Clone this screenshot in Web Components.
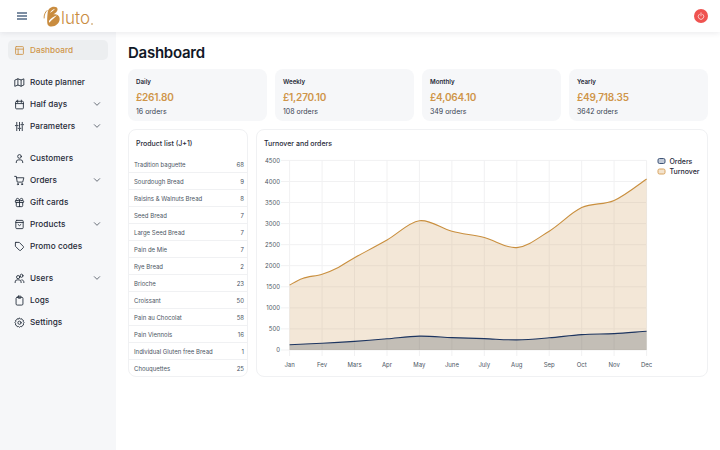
<!DOCTYPE html>
<html lang="en">
<head>
<meta charset="utf-8">
<title>Dashboard</title>
<style>
  html, body { margin: 0; height: 100%; background: #fff; }
  body { font-family: "Inter", "Noto Sans", sans-serif; color: #111827; overflow: hidden; }
  #app { display: grid; grid-template-columns: 116px 1fr; grid-template-rows: 32px 1fr; width: 720px; height: 450px; }
  app-topbar { grid-column: 1 / 3; }
</style>
</head>
<body>
<div id="app">
  <app-topbar></app-topbar>
  <side-nav>
    <nav-group>
      <nav-item icon="layout" active>Dashboard</nav-item>
    </nav-group>
    <nav-group>
      <nav-item icon="map">Route planner</nav-item>
      <nav-item icon="calendar" chevron>Half days</nav-item>
      <nav-item icon="sliders" chevron>Parameters</nav-item>
    </nav-group>
    <nav-group>
      <nav-item icon="user">Customers</nav-item>
      <nav-item icon="cart" chevron>Orders</nav-item>
      <nav-item icon="gift">Gift cards</nav-item>
      <nav-item icon="bag" chevron>Products</nav-item>
      <nav-item icon="tag">Promo codes</nav-item>
    </nav-group>
    <nav-group>
      <nav-item icon="users" chevron>Users</nav-item>
      <nav-item icon="clipboard">Logs</nav-item>
      <nav-item icon="gear">Settings</nav-item>
    </nav-group>
  </side-nav>
  <dash-main>
    <stat-card label="Daily" amount="£261.80" orders="16 orders"></stat-card>
    <stat-card label="Weekly" amount="£1,270.10" orders="108 orders"></stat-card>
    <stat-card label="Monthly" amount="£4,064.10" orders="349 orders"></stat-card>
    <stat-card label="Yearly" amount="£49,718.35" orders="3642 orders"></stat-card>
    <product-list slot="bottom"></product-list>
    <turnover-chart slot="bottom"></turnover-chart>
  </dash-main>
</div>

<script>
// tracés des icônes du menu
const ICONS = {
  layout: '<rect x="3.500" y="3.500" width="17" height="17" rx="1.500"/><path d="M3.500 9h17M9 9v11.500"/>',
  map: '<path d="M2.500 6.500 8.500 4l7 2.500L21.500 4v13.500L15.500 20l-7-2.500L2.500 20z"/><path d="M8.500 4v13.500M15.500 6.500V20"/>',
  calendar: '<rect x="3.500" y="5" width="17" height="16.500" rx="2"/><path d="M8 2.500v5M16 2.500v5M3.500 10h17"/>',
  sliders: '<path d="M6 3v5M6 12v9M12 3v11M12 18v3M18 3v3M18 10v11M3 10h6M9 16h6M15 8h6"/>',
  user: '<circle cx="12" cy="7.500" r="4"/><path d="M5 21v-1.500A4.500 4.500 0 0 1 9.500 15h5a4.500 4.500 0 0 1 4.500 4.500V21"/>',
  cart: '<path d="M1.500 3H5l2 12.500h12L21.500 6H5.500"/><circle cx="8.500" cy="20" r="1.300"/><circle cx="17.500" cy="20" r="1.300"/>',
  gift: '<rect x="3" y="8" width="18" height="4" rx="1"/><path d="M12 8v13M5 12v7a2 2 0 0 0 2 2h10a2 2 0 0 0 2-2v-7"/><path d="M7.500 8a2.500 2.500 0 0 1 0-5C10 3 12 5.500 12 8c0-2.500 2-5 4.500-5a2.500 2.500 0 0 1 0 5"/>',
  bag: '<rect x="4" y="3" width="16" height="18" rx="2"/><path d="M4 7.500h16M9 12l3 2.500 3-2.500"/>',
  tag: '<path d="M4 3h7.500l8.800 8.800a2 2 0 0 1 0 2.800l-5.700 5.700a2 2 0 0 1-2.800 0L3 11.500V4a1 1 0 0 1 1-1z"/>',
  users: '<circle cx="9" cy="9" r="3.500"/><path d="M2.500 21v-1.500A4.500 4.500 0 0 1 7 15h4a4.500 4.500 0 0 1 4.500 4.500V21"/><ellipse cx="16.500" cy="6" rx="3" ry="3.500"/><path d="M17 15c2.500 0 4.500 2 4.500 4.500V21"/>',
  clipboard: '<rect x="4.500" y="5" width="15" height="17" rx="2.500"/><rect x="8.500" y="2.500" width="7" height="4.500" rx="1.500"/>',
  gear: '<path d="M12 2.500l2.200 1.800 2.800-.5 1.200 2.600 2.600 1.200-.5 2.800 1.800 2.100-1.800 2.100.5 2.800-2.600 1.200-1.200 2.600-2.800-.5-2.200 1.800-2.200-1.800-2.800.5-1.200-2.600-2.600-1.200.5-2.800-1.800-2.100 1.800-2.100-.5-2.800 2.600-1.200L7 3.800l2.800.5z"/><circle cx="12" cy="12.500" r="3.500"/>'
};

class AppTopbar extends HTMLElement {
  constructor() {
    super();
    this.attachShadow({ mode: "open" });
    this.shadowRoot.innerHTML = `
      <style>
        :host { display: flex; align-items: center; height: 32px; background: #fff; position: relative; z-index: 2;
          box-shadow: 0 1px 6px rgba(17, 24, 39, .09); font-family: "Inter", sans-serif; }
        .burger { display: flex; flex-direction: column; gap: 1.400px; width: 10px; margin-left: 17px; }
        .burger i { display: block; height: 1.600px; background: #7d8ea3; }
        .logo { display: flex; align-items: center; margin-left: 16px; color: #c98c3f; }
        .logo svg { display: block; width: 18px; height: 21px; }
        .logo span { font-size: 17px; font-weight: 300; line-height: 22px; position: relative; top: 2px; }
        .logo b { width: 2px; height: 2px; border-radius: 50%; background: #d9b98c; align-self: flex-end; margin: 0 0 2px 1px; }
        .power { margin-left: auto; margin-right: 12px; width: 14px; height: 14px; border-radius: 50%; background: #ef5350;
          display: flex; align-items: center; justify-content: center; }
        .power svg { width: 8px; height: 8px; fill: none; stroke: #fde3e3; stroke-width: 2.400; stroke-linecap: round; }
      </style>
      <div class="burger"><i></i><i></i><i></i></div>
      <div class="logo">
        <svg viewBox="0 0 20 22" preserveAspectRatio="none" aria-hidden="true">
          <path fill="#c98c3f" d="M9.500 1.200C12.500.2 16 .8 16.200 3.300c.2 2.300-2.600 4.200-4.700 5.400 3.200-.3 7 .8 7 5 0 4.600-4.500 7.800-9 7.800-2.600 0-4.200-1.200-4.600-3C4.300 15 5 8.500 5.300 6 5.500 4 7.300 1.900 9.500 1.200z"/>
          <path fill="#fff" d="M6.500 15.800C9 13 12 10.800 15.500 9.800 13 12 10 14.600 7 17.500zM8 6.500C9.500 4.800 11.500 3 13.500 2.800 12 4.500 10 6 8 7.200z"/>
          <path fill="none" stroke="#c98c3f" stroke-width="1" d="M4.800 4.500C2.300 6.500 1 9.500 1.300 13"/>
        </svg>
        <span>luto</span><b></b>
      </div>
      <div class="power"><svg viewBox="0 0 24 24"><path d="M7 6.500a8.500 8.500 0 1 0 10 0M12 2.500v9"/></svg></div>
    `;
  }
}

class SideNav extends HTMLElement {
  constructor() {
    super();
    this.attachShadow({ mode: "open" });
    this.shadowRoot.innerHTML = `
      <style>
        :host { display: flex; flex-direction: column; gap: 12px; padding: 8px 8px 0; background: #f6f7f9; box-sizing: border-box; }
      </style>
      <slot></slot>
    `;
  }
}

class NavGroup extends HTMLElement {
  constructor() {
    super();
    this.attachShadow({ mode: "open" });
    this.shadowRoot.innerHTML = `
      <style>:host { display: flex; flex-direction: column; gap: 2px; }</style>
      <slot></slot>
    `;
  }
}

class NavItem extends HTMLElement {
  constructor() {
    super();
    this.attachShadow({ mode: "open" });
    const icon = ICONS[this.getAttribute("icon")] || "";
    const chevron = this.hasAttribute("chevron")
      ? '<svg class="chev" viewBox="0 0 24 24"><path d="M4 8l8 8 8-8"/></svg>' : "";
    this.shadowRoot.innerHTML = `
      <style>
        :host { display: flex; align-items: center; height: 20px; padding-left: 6px; border-radius: 5px;
          font: 500 8.200px/20px "Inter", sans-serif; color: #1f2937; letter-spacing: .05px; }
        :host([active]) { background: #eceef0; color: #cf9549; }
        svg { display: block; fill: none; stroke: currentColor; stroke-linecap: round; stroke-linejoin: round; }
        .ico { width: 11px; height: 11px; stroke-width: 1.900; margin-right: 5px; }
        .chev { width: 8px; height: 8px; stroke-width: 2; margin-left: auto; margin-right: 7px; }
      </style>
      <svg class="ico" viewBox="0 0 24 24">${icon}</svg>
      <slot></slot>
      ${chevron}
    `;
  }
}

class DashMain extends HTMLElement {
  constructor() {
    super();
    this.attachShadow({ mode: "open" });
    this.shadowRoot.innerHTML = `
      <style>
        :host { display: flex; flex-direction: column; padding: 10px 12px 0; box-sizing: border-box; }
        h1 { margin: 0; height: 27px; font: 600 15px/22px "Inter", sans-serif; letter-spacing: -.25px; color: #111827; }
        .stats { display: grid; grid-template-columns: repeat(4, 1fr); gap: 8px; height: 52px; }
        .bottom { display: grid; grid-template-columns: 120px 1fr; gap: 8px; height: 248px; margin-top: 8px; }
      </style>
      <h1>Dashboard</h1>
      <div class="stats"><slot></slot></div>
      <div class="bottom"><slot name="bottom"></slot></div>
    `;
  }
}

class StatCard extends HTMLElement {
  constructor() {
    super();
    this.attachShadow({ mode: "open" });
    this.shadowRoot.innerHTML = `
      <style>
        :host { display: flex; flex-direction: column; padding: 8px 8px 0; background: #f6f7f9; border-radius: 8px;
          box-sizing: border-box; font-family: "Inter", sans-serif; }
        .l { font-size: 6.200px; line-height: 10px; font-weight: 600; color: #1f2937; }
        .a { font-size: 10px; line-height: 16px; margin-top: 2px; font-weight: 600; color: #cf9549; letter-spacing: -.2px; }
        .o { font-size: 7px; line-height: 11px; margin-top: 1px; color: #374151; }
      </style>
      <div class="l">${this.getAttribute("label")}</div>
      <div class="a">${this.getAttribute("amount")}</div>
      <div class="o">${this.getAttribute("orders")}</div>
    `;
  }
}

const PRODUCTS = [
  ["Tradition baguette", 68], ["Sourdough Bread", 9], ["Raisins & Walnuts Bread", 8],
  ["Seed Bread", 7], ["Large Seed Bread", 7], ["Pain de Mie", 7], ["Rye Bread", 2],
  ["Brioche", 23], ["Croissant", 50], ["Pain au Chocolat", 58], ["Pain Viennois", 16],
  ["Individual Gluten free Bread", 1], ["Chouquettes", 25]
];

class ProductList extends HTMLElement {
  constructor() {
    super();
    this.attachShadow({ mode: "open" });
    const rows = PRODUCTS.map(p => `<li><span>${p[0].replace("&", "&amp;")}</span><span>${p[1]}</span></li>`).join("");
    this.shadowRoot.innerHTML = `
      <style>
        :host { display: block; border: 1px solid #f0f1f3; border-radius: 8px; box-sizing: border-box; font-family: "Inter", sans-serif; overflow: hidden; }
        h2 { margin: 0; padding: 8px 0 0 7px; height: 26px; box-sizing: border-box; font-size: 7px; line-height: 11px; font-weight: 500; color: #1f2937; }
        ul { list-style: none; margin: 0; padding: 0; }
        li { display: flex; justify-content: space-between; align-items: center; height: 17px; padding: 0 3px 0 5px; box-sizing: border-box;
          font-size: 6px; color: #4b5563; border-bottom: 1px solid #f0f1f3; }
        li:last-child { border-bottom: 0; }
      </style>
      <h2>Product list (J+1)</h2>
      <ul>${rows}</ul>
    `;
  }
}

// courbe lissée façon chart.js
function smooth(pts) {
  let d = `M${pts[0][0].toFixed(1)} ${pts[0][1].toFixed(1)}`;
  for (let i = 0; i < pts.length - 1; i++) {
    const p0 = pts[i - 1] || pts[i], p1 = pts[i], p2 = pts[i + 1], p3 = pts[i + 2] || p2;
    const k = 0.17;
    d += `C${(p1[0] + (p2[0] - p0[0]) * k).toFixed(1)} ${(p1[1] + (p2[1] - p0[1]) * k).toFixed(1)} ` +
         `${(p2[0] - (p3[0] - p1[0]) * k).toFixed(1)} ${(p2[1] - (p3[1] - p1[1]) * k).toFixed(1)} ${p2[0].toFixed(1)} ${p2[1].toFixed(1)}`;
  }
  return d;
}

class TurnoverChart extends HTMLElement {
  constructor() {
    super();
    this.attachShadow({ mode: "open" });
    const months = ["Jan", "Fev", "Mars", "Apr", "May", "June", "July", "Aug", "Sep", "Oct", "Nov", "Dec"];
    const turnover = [[0, 1540], [.4, 1700], [1, 1800], [1.5, 1960], [2, 2190], [3, 2610], [4, 3070], [5, 2820], [6, 2670], [7, 2430], [8, 2820], [9, 3380], [10, 3550], [11, 4060]];
    const orders = [125, 160, 205, 265, 330, 295, 270, 240, 290, 365, 390, 445];
    const X = i => 289.6 + i * 32.45, Y = v => 350 - v * 0.04213;
    const t = turnover.map(p => [X(p[0]), Y(p[1])]), o = orders.map((v, i) => [X(i), Y(v)]);
    const close = `L${X(11).toFixed(1)} 350L${X(0).toFixed(1)} 350Z`;
    let grid = "", labels = "";
    for (let v = 0; v <= 4500; v += 500) {
      grid += `<path d="M281 ${Y(v).toFixed(1)}H${X(11).toFixed(1)}"/>`;
      labels += `<text x="280" y="${(Y(v) + 2.2).toFixed(1)}" text-anchor="end">${v}</text>`;
    }
    months.forEach((m, i) => {
      grid += `<path d="M${X(i).toFixed(1)} 160.300V356"/>`;
      labels += `<text x="${X(i).toFixed(1)}" y="367" text-anchor="middle">${m}</text>`;
    });
    this.shadowRoot.innerHTML = `
      <style>
        :host { display: block; border: 1px solid #f0f1f3; border-radius: 8px; box-sizing: border-box; font-family: "Inter", sans-serif; }
        h2 { margin: 0; padding: 8px 0 0 7px; height: 19px; box-sizing: border-box; font-size: 7px; line-height: 11px; font-weight: 500; color: #1f2937; }
        svg { display: block; width: 450px; height: 227px; }
        .grid path { stroke: #f1f1f2; stroke-width: 1; fill: none; }
        .lab text { font-size: 6px; fill: #4b5563; }
        .leg text { font-size: 7px; font-weight: 500; fill: #1f2937; }
      </style>
      <h2>Turnover and orders</h2>
      <svg viewBox="257 149 450 227">
        <g class="grid">${grid}</g>
        <path d="${smooth(t)}${close}" fill="rgb(207,158,96)" fill-opacity=".25"/>
        <path d="${smooth(o)}${close}" fill="rgb(51,66,84)" fill-opacity=".25"/>
        <path d="${smooth(t)}" fill="none" stroke="#c98f3e" stroke-width="1.100"/>
        <path d="${smooth(o)}" fill="none" stroke="#1d3560" stroke-width="1.100"/>
        <g class="lab">${labels}</g>
        <g class="leg">
          <rect x="658" y="158.500" width="7" height="5" rx="1.500" fill="#c3cbd8" stroke="#3f5578" stroke-width="1"/>
          <text x="669.500" y="163.500">Orders</text>
          <rect x="658" y="169" width="7" height="5" rx="1.500" fill="#f3e3cd" stroke="#d8a35e" stroke-width="1"/>
          <text x="669.500" y="174">Turnover</text>
        </g>
      </svg>
    `;
  }
}

customElements.define("app-topbar", AppTopbar);
customElements.define("side-nav", SideNav);
customElements.define("nav-group", NavGroup);
customElements.define("nav-item", NavItem);
customElements.define("dash-main", DashMain);
customElements.define("stat-card", StatCard);
customElements.define("product-list", ProductList);
customElements.define("turnover-chart", TurnoverChart);
</script>
</body>
</html>
